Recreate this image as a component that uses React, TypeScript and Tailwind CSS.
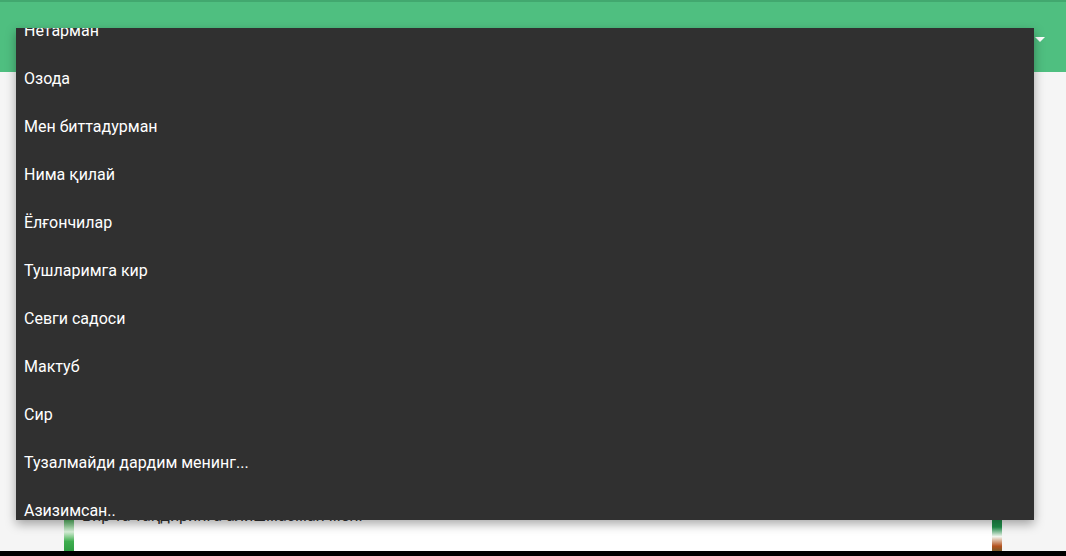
import React from "react";

const items = [
  "Нетарман",
  "Озода",
  "Мен биттадурман",
  "Нима қилай",
  "Ёлғончилар",
  "Тушларимга кир",
  "Севги садоси",
  "Мактуб",
  "Сир",
  "Тузалмайди дардим менинг...",
  "Азизимсан..",
];

export default function App() {
  return (
    <div
      className="relative w-[1066px] h-[556px] overflow-hidden bg-[#f5f5f5] flex flex-col"
      style={{ fontFamily: "Roboto, 'Noto Sans', sans-serif" }}
    >
      <header className="h-[72px] shrink-0 bg-[#4fbf80] border-t-2 border-[#42a86f] flex items-center justify-end pr-[21px]">
        <div className="w-0 h-0 border-l-[5px] border-r-[5px] border-t-[5px] border-l-transparent border-r-transparent border-t-white mt-[4px]" />
      </header>
      <main className="flex-1 flex px-[64px]">
        <div className="flex-1 flex bg-white">
          <div className="w-[10px] bg-[linear-gradient(to_bottom,#3fae4f_0%,#3fae4f_93%,#d8efd9_96%,#3fae4f_98%,#2f9e42_100%)]" />
          <div className="flex-1 flex flex-col justify-end pb-[23px] pl-[8px]">
            <p className="text-[16px] leading-[24px] text-[#333]">
              Бир та тақдиринга алишмасман мен.
            </p>
          </div>
          <div className="w-[10px] bg-[linear-gradient(to_bottom,#1f8f4a_0%,#1f8f4a_95%,#f3f6ef_97%,#b4521e_99%,#7a5a2a_100%)]" />
        </div>
      </main>
      <footer className="h-[5px] shrink-0 bg-black" />

      <div className="absolute left-[16px] top-[28px] w-[1018px] h-[492px] bg-[#303030] overflow-hidden shadow-[0_4px_10px_rgba(0,0,0,0.35)]">
        <ul className="-mt-[21px]">
          {items.map((t) => (
            <li
              key={t}
              className="h-[48px] flex items-center px-[8px] text-white text-[16px]"
            >
              {t}
            </li>
          ))}
        </ul>
      </div>
    </div>
  );
}
